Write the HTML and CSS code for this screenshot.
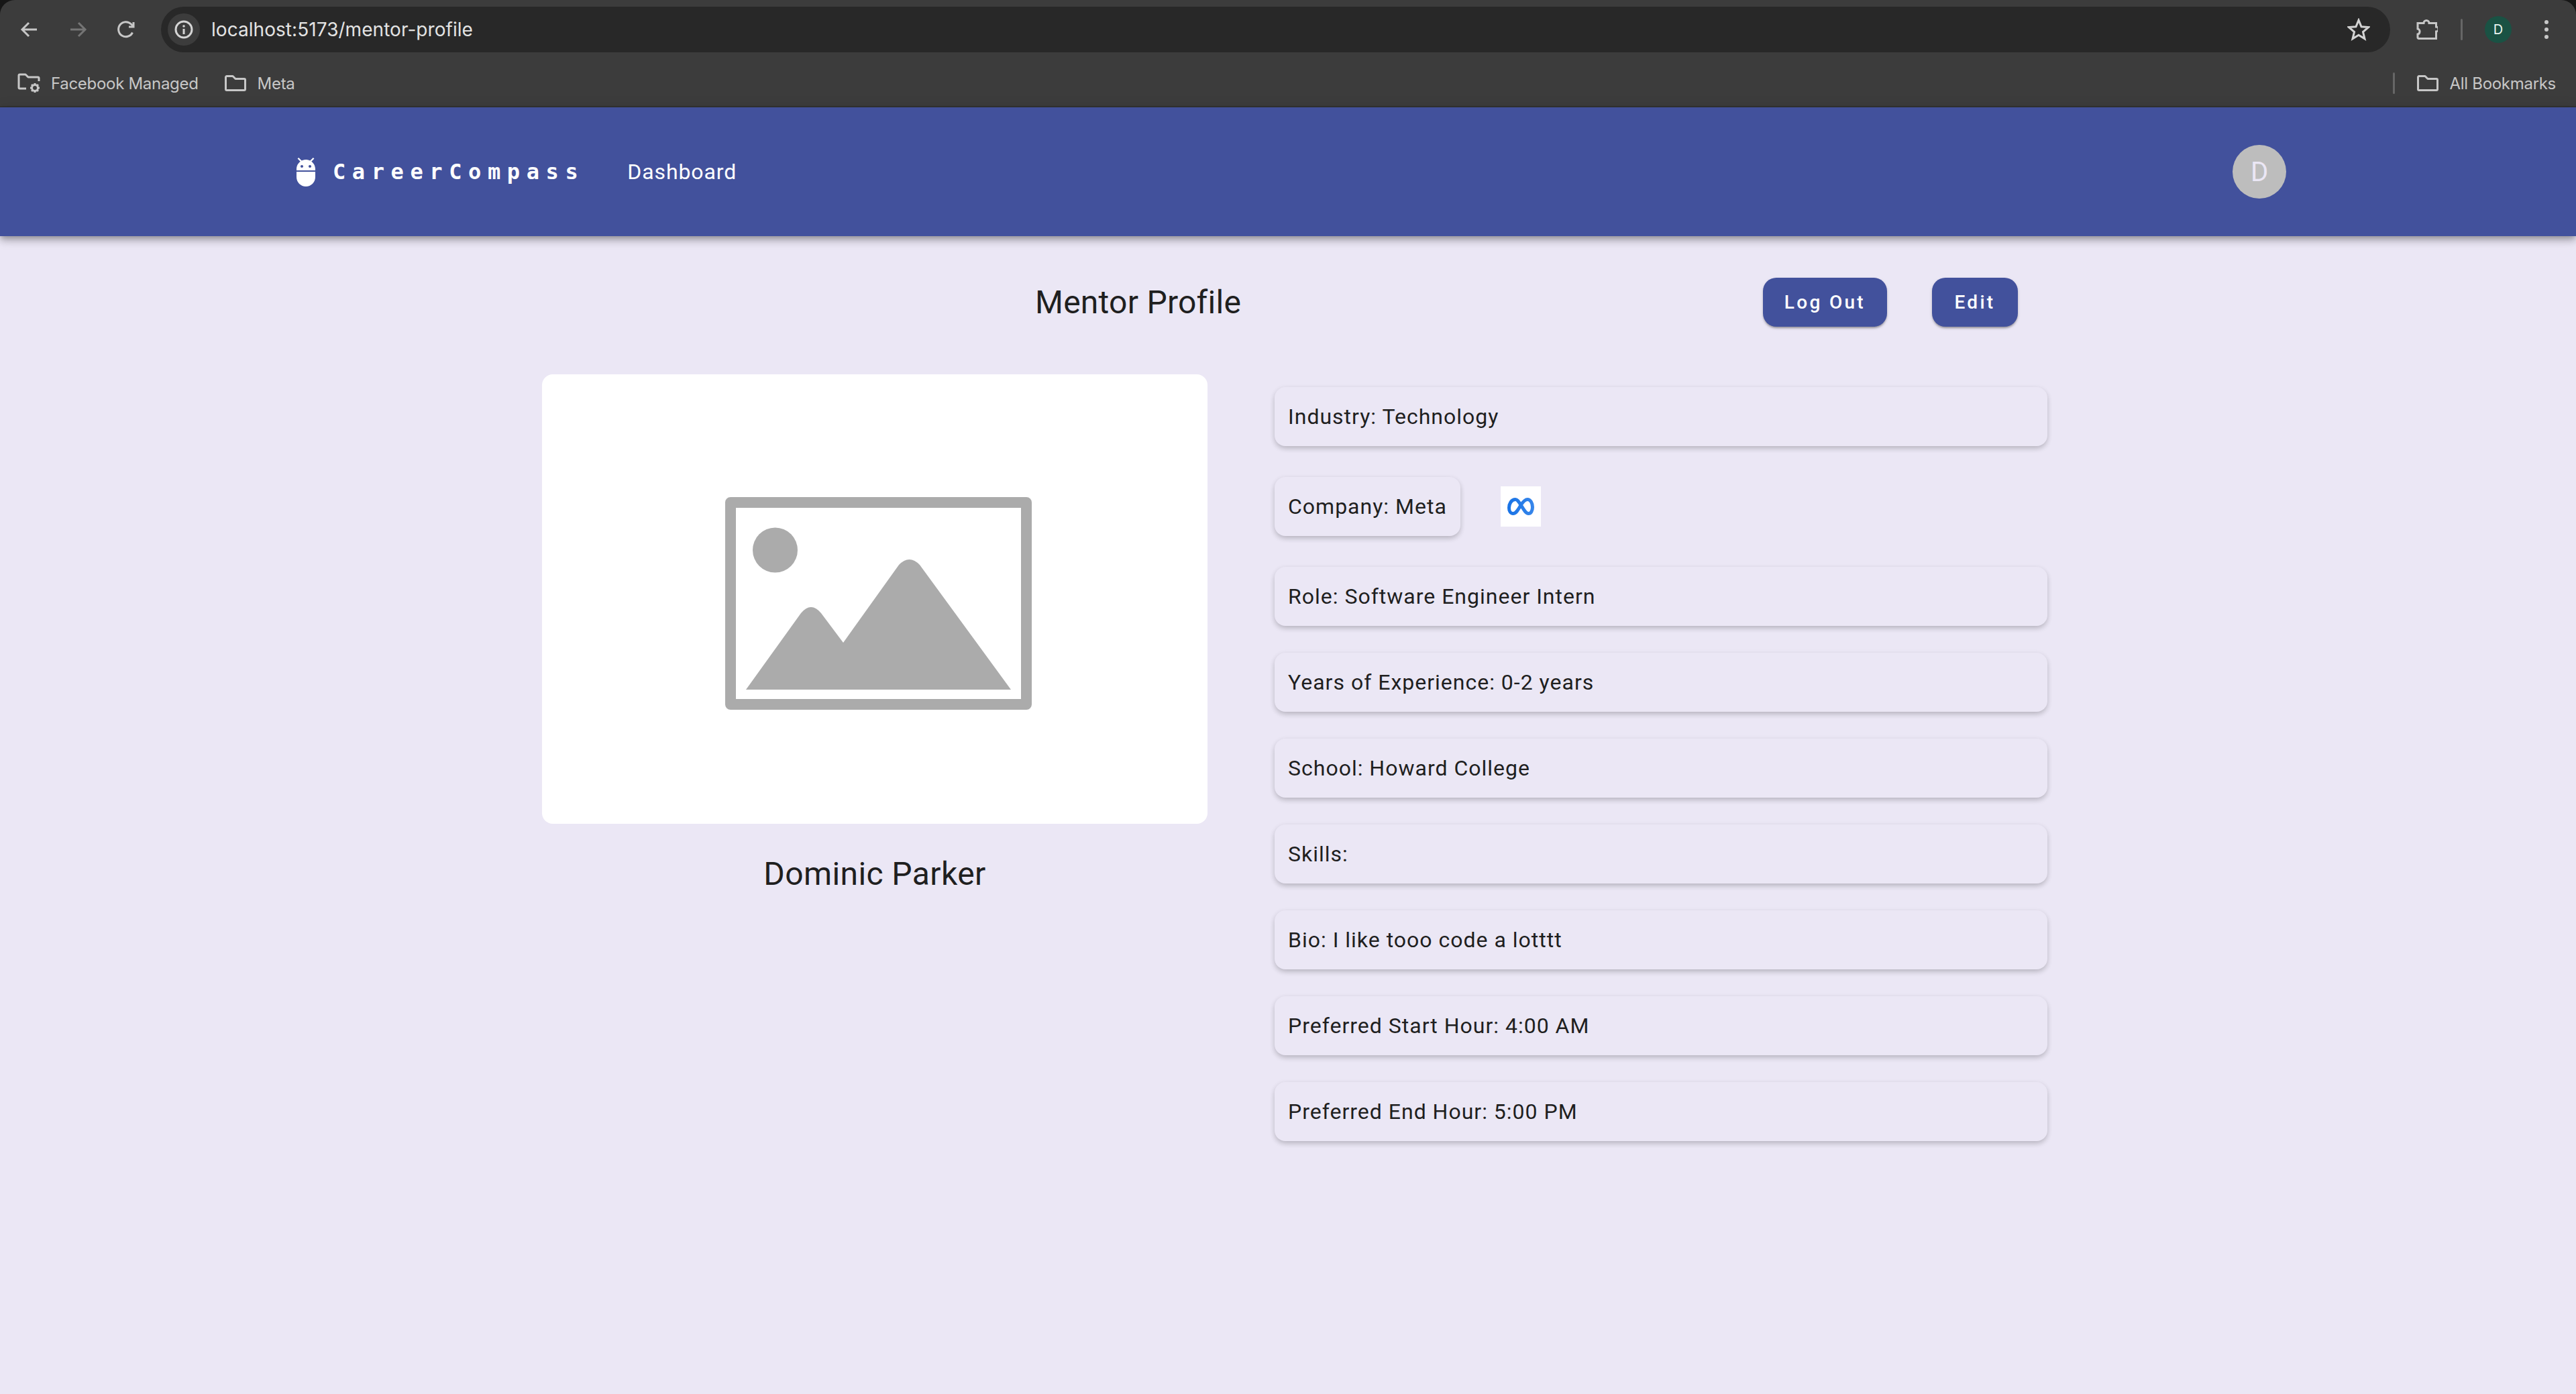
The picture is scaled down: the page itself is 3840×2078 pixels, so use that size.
FILE: index.html
```html
<!DOCTYPE html>
<html lang="en">
<head>
<meta charset="utf-8">
<title>Mentor Profile</title>
<link rel="stylesheet" href="styles.css">
</head>
<body>
<div class="chrome">
  <div class="toolbar">
    <div class="nav">
      <svg class="tool" viewBox="0 0 32 32"><path d="M27 16H6M15 6L5 16l10 10" class="stroke"/></svg>
      <svg class="tool dim" viewBox="0 0 32 32"><path d="M5 16h21M17 6l10 10-10 10" class="stroke"/></svg>
      <svg class="tool" viewBox="0 0 32 32"><path d="M25.500 20.500A11 11 0 1 1 23.500 8L27 11.500" class="stroke"/><path d="M27 5v7h-7" class="stroke"/></svg>
    </div>
    <div class="omnibox">
      <span class="site-chip">
        <svg class="site-icon" viewBox="0 0 28 28"><circle cx="14" cy="14" r="12" class="stroke-light"/><circle cx="14" cy="9" r="1.800" class="fill-light"/><path d="M14 13v8" class="stroke-light"/></svg>
      </span>
      <span class="url">localhost:5173/mentor-profile</span>
      <svg class="star" viewBox="0 0 34 34"><path d="M17 3l4 9.800 10.500.800-8 6.900 2.500 10.300L17 25.300 8 30.800l2.500-10.300-8-6.900L13 12.800z" class="stroke-light"/></svg>
    </div>
    <svg class="tool puzzle" viewBox="0 0 32 32"><path d="M2 6.500h9a4 4 0 0 1 8 0H29.500V12a3.500 3.500 0 0 1 0 7v10.500H3.500a1.500 1.500 0 0 1-1.500-1.500V23a4 4 0 0 0 3-3.500A4 4 0 0 0 2 15z" class="stroke"/></svg>
    <span class="tool-divider"></span>
    <span class="profile-dot">D</span>
    <svg class="tool menu-dots" viewBox="0 0 32 32"><circle cx="16" cy="5" r="3"/><circle cx="16" cy="16" r="3"/><circle cx="16" cy="27" r="3"/></svg>
  </div>
  <div class="bookmarks">
    <svg class="bm-icon managed" viewBox="0 0 38 30"><path d="M13 23H3.500A1.500 1.500 0 0 1 2 21.500V3.500A1.500 1.500 0 0 1 3.500 2H12l4 4h14.500A1.500 1.500 0 0 1 32 7.500V12" class="stroke-thin"/><circle cx="26" cy="22" r="4.500" class="gear"/><path d="M26 15v3M26 26v3M19 22h3M30 22h3M21 17l2 2M29 25l2 2M31 17l-2 2M23 25l-2 2" class="stroke-thin"/></svg>
    <span class="bm-label">Facebook Managed</span>
    <svg class="bm-icon folder meta-folder" viewBox="0 0 32 24"><path d="M3 1.500h9l4 4h13a1.500 1.500 0 0 1 1.500 1.500v14a1.500 1.500 0 0 1-1.500 1.500H3A1.500 1.500 0 0 1 1.500 21V3A1.500 1.500 0 0 1 3 1.500z" class="stroke-thin"/></svg>
    <span class="bm-label">Meta</span>
    <span class="bm-divider"></span>
    <svg class="bm-icon folder" viewBox="0 0 32 24"><path d="M3 1.500h9l4 4h13a1.500 1.500 0 0 1 1.500 1.500v14a1.500 1.500 0 0 1-1.500 1.500H3A1.500 1.500 0 0 1 1.500 21V3A1.500 1.500 0 0 1 3 1.500z" class="stroke-thin"/></svg>
    <span class="bm-label">All Bookmarks</span>
  </div>
</div>

<header class="appbar">
  <svg class="adb" viewBox="0 0 24 24"><path d="M5 16c0 3.870 3.130 7 7 7s7-3.130 7-7v-4H5v4zM16.120 4.370l2.100-2.100-.82-.83-2.300 2.310C14.160 3.280 13.120 3 12 3s-2.160.28-3.090.75L6.600 1.440l-.82.83 2.100 2.100C6.140 5.640 5 7.680 5 10v1h14v-1c0-2.320-1.140-4.360-2.880-5.630zM9 9c-.55 0-1-.45-1-1s.45-1 1-1 1 .45 1 1-.45 1-1 1zm6 0c-.55 0-1-.45-1-1s.45-1 1-1 1 .45 1 1-.45 1-1 1z"/></svg>
  <span class="brand">CareerCompass</span>
  <a class="nav-link">Dashboard</a>
  <span class="avatar">D</span>
</header>

<main class="page">
  <div class="title-row">
    <h1 class="title">Mentor Profile</h1>
    <div class="actions">
      <button class="btn">Log Out</button>
      <button class="btn">Edit</button>
    </div>
  </div>
  <div class="columns">
    <section class="photo-col">
      <div class="photo">
        <svg class="placeholder" viewBox="808 558 992 670">
          <path class="ph-frame" d="M1089 749h441v301h-441z"/>
          <circle class="ph-fill" cx="1155.500" cy="820" r="33.500"/>
          <path class="ph-fill" d="M1112 1028L1194 914Q1209 896 1224 914L1257 958L1340 842Q1355.500 826 1371 842L1507 1028z"/>
        </svg>
      </div>
      <h2 class="name">Dominic Parker</h2>
    </section>
    <section class="details">
      <div class="card">Industry: Technology</div>
      <div class="company-row">
        <div class="card">Company: Meta</div>
        <span class="logo-box">
          <svg class="meta-logo" viewBox="0 0 60 60"><defs><linearGradient id="metaGrad" x1="0" y1="0" x2="1" y2="0"><stop offset="0" stop-color="#1a74e6"/><stop offset="1" stop-color="#3585ea"/></linearGradient></defs><path d="M22 19.500C16 19.500 12.500 26 12.500 32C12.500 37 15 40.500 18.500 40.500C23 40.500 26 35 30 28C34 22 36.500 19.500 40 19.500C44.500 19.500 47.500 25 47.500 31C47.500 36.500 45 40.500 41.500 40.500C37 40.500 33.500 33 30 27.500C27 23 25 19.500 22 19.500Z" class="meta-path"/></svg>
        </span>
      </div>
      <div class="card">Role: Software Engineer Intern</div>
      <div class="card">Years of Experience: 0-2 years</div>
      <div class="card">School: Howard College</div>
      <div class="card">Skills:</div>
      <div class="card">Bio: I like tooo code a lotttt</div>
      <div class="card">Preferred Start Hour: 4:00 AM</div>
      <div class="card">Preferred End Hour: 5:00 PM</div>
    </section>
  </div>
</main>
</body>
</html>
```
FILE: styles.css
```css
* { box-sizing: border-box; }
html, body { margin: 0; height: 100%; }
body {
  background: #161616;
  display: flex;
  flex-direction: column;
  font-family: Roboto, "Liberation Sans", sans-serif;
  overflow: hidden;
}

/* Browser chrome */
.chrome {
  height: 160px;
  flex: none;
  background: #3c3c3c;
  border-radius: 22px 22px 0 0;
  border-bottom: 2px solid #343434;
  font-family: Inter, "Liberation Sans", sans-serif;
}
.toolbar {
  height: 88px;
  display: flex;
  align-items: center;
  padding: 0 28px;
}
.nav { display: flex; gap: 40px; margin-right: 36px; }
.tool { width: 32px; height: 32px; flex: none; color: #c7c7c7; fill: #c7c7c7; }
.tool.dim { color: #757575; }
.stroke { fill: none; stroke: currentColor; stroke-width: 3; }
.stroke-light { fill: none; stroke: #d4d4d4; stroke-width: 3; }
.stroke-thin { fill: none; stroke: #c7c7c7; stroke-width: 3; stroke-linejoin: round; }
.fill-light { fill: #d4d4d4; }
.gear { fill: #3c3c3c; stroke: #c7c7c7; stroke-width: 3; }
.omnibox {
  flex: 1;
  height: 68px;
  background: #282828;
  border-radius: 34px;
  display: flex;
  align-items: center;
  padding: 0 30px 0 10px;
}
.site-chip {
  width: 48px;
  height: 48px;
  border-radius: 50%;
  background: #3c3c3c;
  display: flex;
  align-items: center;
  justify-content: center;
}
.site-icon { width: 28px; height: 28px; }
.url { color: #e3e3e3; font-size: 28px; letter-spacing: .05px; margin-left: 17px; flex: 1; }
.star { width: 34px; height: 34px; }
.puzzle { margin-left: 39px; }
.tool-divider { width: 3px; height: 32px; margin-left: 34px; background: #666; border-radius: 2px; flex: none; }
.profile-dot {
  width: 40px;
  height: 40px;
  margin-left: 33px;
  border-radius: 50%;
  background: #1a5244;
  color: #e8f5ef;
  font-size: 20px;
  display: flex;
  align-items: center;
  justify-content: center;
  flex: none;
}
.menu-dots { margin-left: 36px; }
.bookmarks {
  height: 70px;
  display: flex;
  align-items: center;
  padding: 2px 30px 0 26px;
  color: #c7c7c7;
}
.bm-icon { flex: none; }
.managed { width: 38px; height: 30px; margin-right: 12px; }
.folder { width: 32px; height: 24px; margin-right: 17px; }
.meta-folder { margin-left: 39px; }
.bm-label { font-size: 24px; letter-spacing: -.3px; white-space: nowrap; }
.bm-divider { width: 3px; height: 32px; margin-left: auto; margin-right: 33px; background: #666; border-radius: 2px; }

/* App bar */
.appbar {
  height: 192px;
  flex: none;
  background: #42519c;
  color: #fff;
  display: flex;
  align-items: center;
  padding-left: 432px;
  box-shadow: 0 4px 8px -2px rgba(0,0,0,.25), 0 8px 10px 0 rgba(0,0,0,.14), 0 2px 20px 0 rgba(0,0,0,.12);
  position: relative;
}
.adb { width: 48px; height: 48px; fill: #fff; margin-right: 16px; }
.brand {
  font-family: "DejaVu Sans Mono", "Liberation Mono", monospace;
  font-weight: 700;
  font-size: 32px;
  letter-spacing: 9.6px;
  margin-right: 64px;
}
.nav-link { font-size: 32px; letter-spacing: .9px; }
.avatar {
  width: 80px;
  height: 80px;
  margin-left: auto;
  margin-right: 432px;
  border-radius: 50%;
  background: #bdbdbd;
  color: #ebe7f5;
  font-size: 40px;
  display: flex;
  align-items: center;
  justify-content: center;
}

/* Page */
.page {
  flex: 1;
  background: #ebe7f5;
  color: #1f1f1f;
  min-height: 0;
}
.title-row {
  display: flex;
  align-items: center;
  justify-content: space-between;
  padding: 62px 832px 0 1543px;
}
.title { margin: 0; font-size: 48px; font-weight: 400; letter-spacing: .25px; line-height: 73px; }
.actions { display: flex; gap: 67px; }
.btn {
  height: 73px;
  min-width: 128px;
  padding: 0 32px;
  border: 0;
  border-radius: 20px;
  background: #42519c;
  color: #fff;
  font-family: Roboto, sans-serif;
  font-size: 28px;
  font-weight: 500;
  letter-spacing: 3.3px;
  box-shadow: 0 3px 3px -1px rgba(0,0,0,.3), 0 2px 5px rgba(0,0,0,.12);
}
.columns {
  display: flex;
  gap: 100px;
  padding: 71px 788px 0 808px;
  align-items: flex-start;
}
.photo-col { width: 992px; flex: none; }
.photo { height: 670px; background: #fff; border-radius: 16px; overflow: hidden; }
.placeholder { width: 100%; height: 100%; display: block; }
.ph-frame { fill: none; stroke: #ababab; stroke-width: 16; stroke-linejoin: round; }
.ph-fill { fill: #ababab; }
.name { margin: 39px 0 0; font-size: 48px; font-weight: 400; letter-spacing: .4px; line-height: 72px; text-align: center; }
.details {
  flex: 1;
  display: flex;
  flex-direction: column;
  gap: 40px;
  padding-top: 19px;
}
.card {
  height: 88px;
  padding: 0 20px;
  display: flex;
  align-items: center;
  border-radius: 16px;
  background: #ebe7f5;
  font-size: 32px;
  letter-spacing: 1px;
  box-shadow: 0 4px 8px -1px rgba(0,0,0,.2), 0 2px 10px rgba(0,0,0,.06);
}
.company-row { display: flex; align-items: center; gap: 60px; margin: 6px 0; }
.logo-box { width: 60px; height: 60px; background: #fff; display: block; }
.meta-logo { width: 60px; height: 60px; display: block; }
.meta-path { fill: none; stroke: url(#metaGrad); stroke-width: 5; stroke-linejoin: round; }
```
